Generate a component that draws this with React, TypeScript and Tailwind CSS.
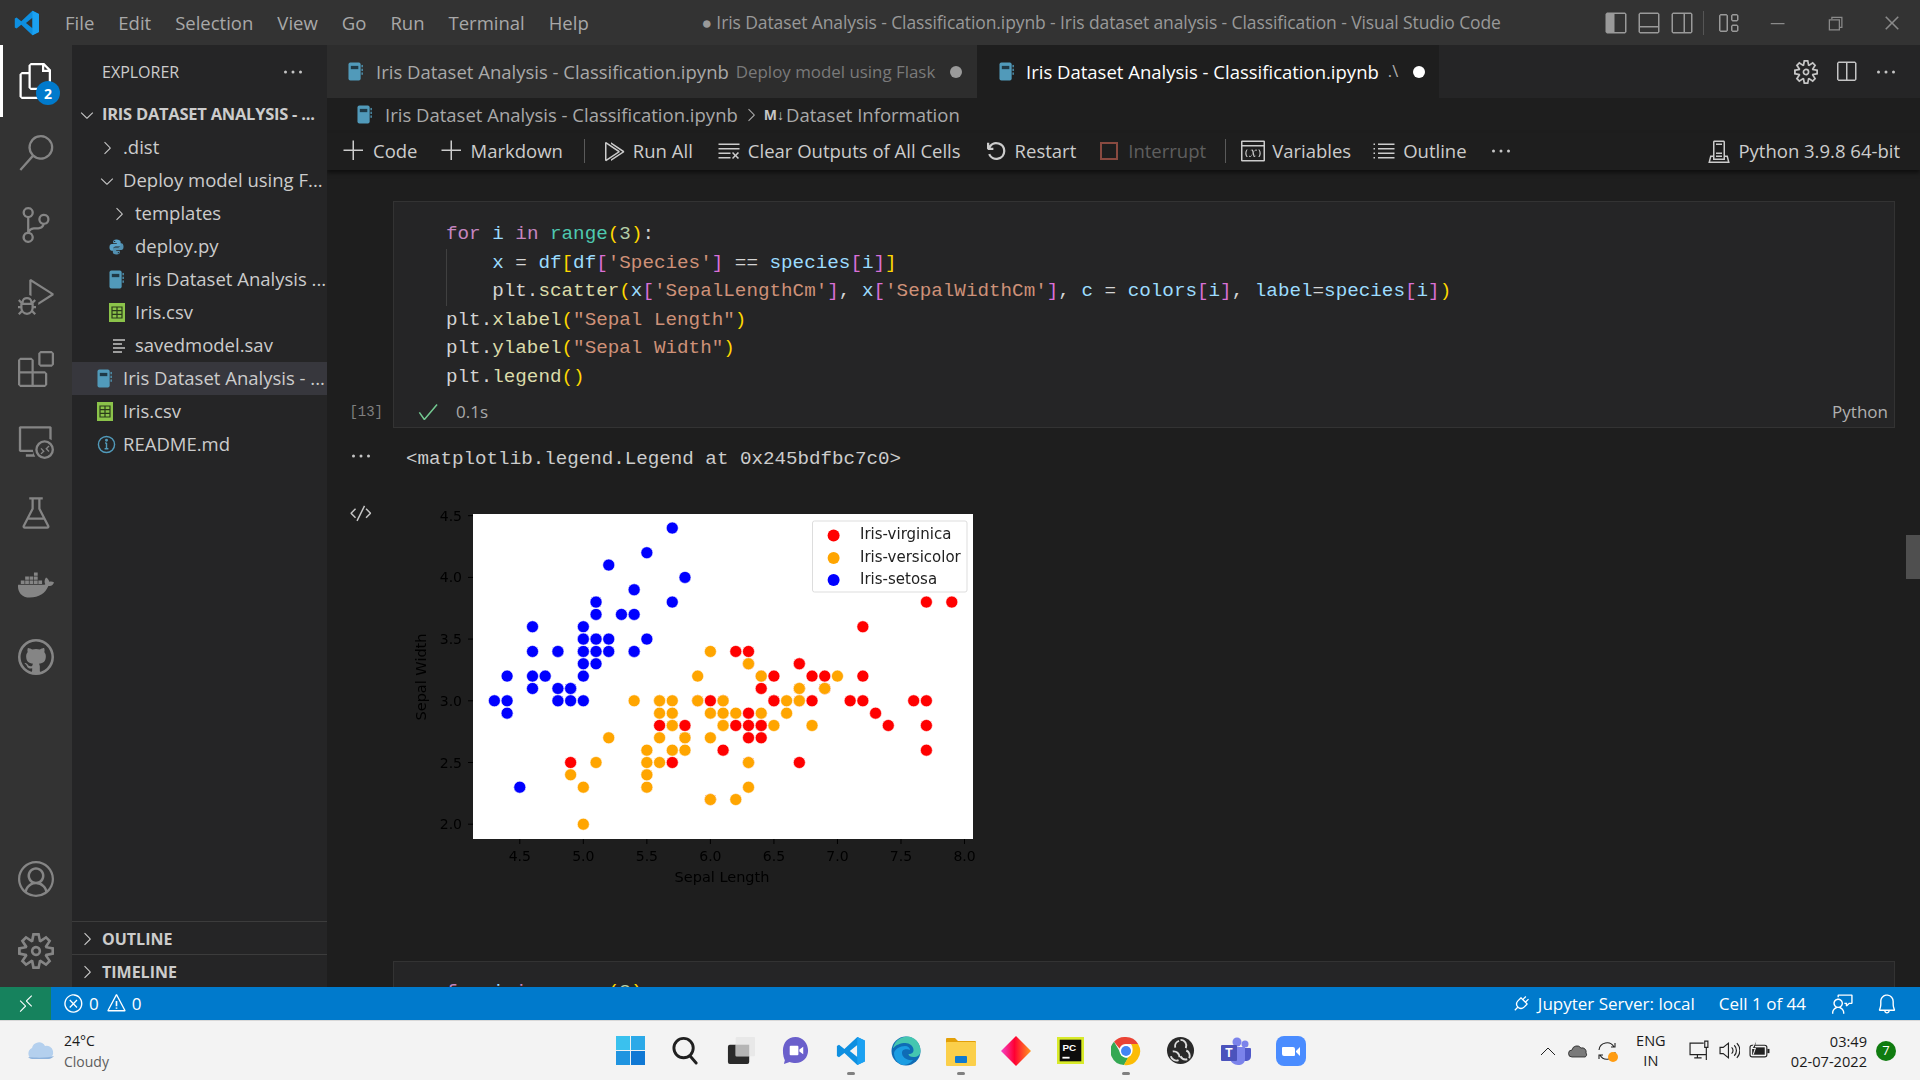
import type { ReactNode } from 'react'
import {
  VscFiles, VscSearch, VscSourceControl, VscDebugAlt, VscExtensions, VscRemoteExplorer, VscBeaker,
  VscAccount, VscSettingsGear, VscGithub, VscChevronRight, VscChevronDown, VscEllipsis, VscAdd,
  VscRunAll, VscClearAll, VscDebugRestart, VscListUnordered, VscCheck, VscCode, VscSplitHorizontal,
  VscLayoutSidebarLeft, VscLayoutPanelOff, VscLayoutSidebarRightOff, VscLayout, VscChromeMinimize,
  VscChromeRestore, VscChromeClose, VscRemote, VscError, VscWarning, VscPlug, VscFeedback, VscBell,
  VscVariableGroup, VscServerEnvironment,
} from 'react-icons/vsc'
import { FaDocker } from 'react-icons/fa'

// ---- Iris data ----

const setosa = '5.1,3.5;4.9,3.0;4.7,3.2;4.6,3.1;5.0,3.6;5.4,3.9;4.6,3.4;5.0,3.4;4.4,2.9;4.9,3.1;5.4,3.7;4.8,3.4;4.8,3.0;4.3,3.0;5.8,4.0;5.7,4.4;5.4,3.9;5.1,3.5;5.7,3.8;5.1,3.8;5.4,3.4;5.1,3.7;4.6,3.6;5.1,3.3;4.8,3.4;5.0,3.0;5.0,3.4;5.2,3.5;5.2,3.4;4.7,3.2;4.8,3.1;5.4,3.4;5.2,4.1;5.5,4.2;4.9,3.1;5.0,3.2;5.5,3.5;4.9,3.1;4.4,3.0;5.1,3.4;5.0,3.5;4.5,2.3;4.4,3.2;5.0,3.5;5.1,3.8;4.8,3.0;5.1,3.8;4.6,3.2;5.3,3.7;5.0,3.3'
const versicolor = '7.0,3.2;6.4,3.2;6.9,3.1;5.5,2.3;6.5,2.8;5.7,2.8;6.3,3.3;4.9,2.4;6.6,2.9;5.2,2.7;5.0,2.0;5.9,3.0;6.0,2.2;6.1,2.9;5.6,2.9;6.7,3.1;5.6,3.0;5.8,2.7;6.2,2.2;5.6,2.5;5.9,3.2;6.1,2.8;6.3,2.5;6.1,2.8;6.4,2.9;6.6,3.0;6.8,2.8;6.7,3.0;6.0,2.9;5.7,2.6;5.5,2.4;5.5,2.4;5.8,2.7;6.0,2.7;5.4,3.0;6.0,3.4;6.7,3.1;6.3,2.3;5.6,3.0;5.5,2.5;5.5,2.6;6.1,3.0;5.8,2.6;5.0,2.3;5.6,2.7;5.7,3.0;5.7,2.9;6.2,2.9;5.1,2.5;5.7,2.8'
const virginica = '6.3,3.3;5.8,2.7;7.1,3.0;6.3,2.9;6.5,3.0;7.6,3.0;4.9,2.5;7.3,2.9;6.7,2.5;7.2,3.6;6.5,3.2;6.4,2.7;6.8,3.0;5.7,2.5;5.8,2.8;6.4,3.2;6.5,3.0;7.7,3.8;7.7,2.6;6.0,2.2;6.9,3.2;5.6,2.8;7.7,2.8;6.3,2.7;6.7,3.3;7.2,3.2;6.2,2.8;6.1,3.0;6.4,2.8;7.2,3.0;7.4,2.8;7.9,3.8;6.4,2.8;6.3,2.8;6.1,2.6;7.7,3.0;6.3,3.4;6.4,3.1;6.0,3.0;6.9,3.1;6.7,3.1;6.9,3.1;5.8,2.7;6.8,3.2;6.7,3.3;6.7,3.0;6.3,2.5;6.5,3.0;6.2,3.4;5.9,3.0'

const px = (v: number) => 119.8 + (v - 4.5) * 127.06
const py = (v: number) => 15.7 + (4.5 - v) * 123.4

function Dots({ data, fill }: { data: string; fill: string }) {
  return (
    <>
      {data.split(';').map((p, i) => {
        const [a, b] = p.split(',').map(Number)
        return <circle key={i} cx={px(a)} cy={py(b)} r={6} fill={fill} stroke="#fff" strokeWidth={0.6} />
      })}
    </>
  )
}

function Chart() {
  const tickX = ['4.5', '5.0', '5.5', '6.0', '6.5', '7.0', '7.5', '8.0']
  const tickY = ['4.5', '4.0', '3.5', '3.0', '2.5', '2.0']
  return (
    <svg viewBox="0 0 600 400" className="w-[600px] h-[400px] blur-[0.5px]" fontFamily="'DejaVu Sans', sans-serif">
      <rect x={73} y={14} width={500} height={325} fill="#fff" />
      {tickX.map((t) => (
        <g key={t}>
          <line x1={px(+t)} x2={px(+t)} y1={339} y2={344} stroke="#000" />
          <text x={px(+t)} y={361} textAnchor="middle" fontSize={14} fill="#000">{t}</text>
        </g>
      ))}
      {tickY.map((t) => (
        <g key={t}>
          <line x1={68} x2={73} y1={py(+t)} y2={py(+t)} stroke="#000" />
          <text x={62} y={py(+t) + 5} textAnchor="end" fontSize={14} fill="#000">{t}</text>
        </g>
      ))}
      <text x={322} y={382} textAnchor="middle" fontSize={14.5} fill="#000">Sepal Length</text>
      <text x={0} y={0} transform="translate(26 177) rotate(-90)" textAnchor="middle" fontSize={14.5} fill="#000">Sepal Width</text>
      <Dots data={virginica} fill="#ff0000" />
      <Dots data={versicolor} fill="#ffa500" />
      <Dots data={setosa} fill="#0000ff" />
      <rect x={412.5} y={21} width={154.5} height={71} rx={2} fill="#fff" stroke="#ddd" />
      <circle cx={433.6} cy={35.5} r={6} fill="#ff0000" />
      <circle cx={433.6} cy={58} r={6} fill="#ffa500" />
      <circle cx={433.6} cy={80} r={6} fill="#0000ff" />
      <text x={460} y={39} fontSize={15} fill="#222">Iris-virginica</text>
      <text x={460} y={62} fontSize={15} fill="#222">Iris-versicolor</text>
      <text x={460} y={84} fontSize={15} fill="#222">Iris-setosa</text>
    </svg>
  )
}

// ---- Small drawn icons ----

function NotebookIcon({ className = '' }: { className?: string }) {
  return (
    <svg viewBox="0 0 16 20" className={`w-[15px] h-[19px] shrink-0 ${className}`}>
      <rect x={0.5} y={0.5} width={13} height={19} rx={2} fill="#519aba" />
      <rect x={3} y={4} width={8} height={3.5} fill="#1f3a47" />
      <rect x={14.4} y={3} width={1.4} height={2.5} fill="#519aba" />
      <rect x={14.4} y={7} width={1.4} height={2.5} fill="#519aba" />
      <rect x={14.4} y={11} width={1.4} height={2.5} fill="#519aba" />
    </svg>
  )
}

function CsvIcon() {
  return (
    <svg viewBox="0 0 16 19" className="w-[16px] h-[19px] shrink-0">
      <rect width={16} height={19} fill="#8bc34a" />
      <path d="M3 4h10v11H3z M3 7.7h10 M3 11.3h10 M8 4v11" fill="none" stroke="#2a3a1a" strokeWidth={1.2} />
    </svg>
  )
}

function PythonIcon() {
  return (
    <svg viewBox="0 0 16 18" className="w-[15px] h-[18px] shrink-0">
      <path d="M8 1C5 1 4.500 2.200 4.500 3.400V5H8.300v.8H3C1.600 5.800.5 6.900.5 9.300s1 3.600 2.400 3.600h1.500v-2c0-1.400 1.200-2.500 2.600-2.500h3.400c1.100 0 2-.9 2-2V3.400C11.900 2 10.700 1 8 1z" fill="#5ba3c9" />
      <path d="M8 17c3 0 3.500-1.200 3.500-2.400V13H7.700v-.8H13c1.400 0 2.500-1.100 2.500-3.500s-1-3.600-2.400-3.600h-1.500v2c0 1.400-1.200 2.500-2.600 2.500H6.100c-1.100 0-2 .9-2 2v3c0 1.400 1.200 2.400 3.900 2.400z" fill="#5ba3c9" opacity={0.85} />
      <circle cx={6} cy={3} r={0.7} fill="#252526" />
      <circle cx={10} cy={15} r={0.7} fill="#252526" />
    </svg>
  )
}

function FileLinesIcon() {
  return (
    <svg viewBox="0 0 20 20" className="w-[20px] h-[20px] shrink-0" fill="none" stroke="#c5c5c5" strokeWidth={1.4}>
      <path d="M4 4h12 M4 8h9 M4 12h12 M4 16h9" />
    </svg>
  )
}

function InfoIcon() {
  return (
    <svg viewBox="0 0 20 20" className="w-[19px] h-[19px] shrink-0" fill="none" stroke="#519aba" strokeWidth={1.5}>
      <circle cx={10} cy={10} r={8.5} />
      <path d="M10 8.500v6 M8 14.500h4 M8.500 8.500H10" />
      <circle cx={10} cy={5.500} r={0.8} fill="#519aba" />
    </svg>
  )
}

function VsLogo({ className = '' }: { className?: string }) {
  return (
    <svg viewBox="0 0 100 100" className={className}>
      <path d="M71 3l25 12v70L71 97 28 57 10 71 3 67V33l7-4 18 14L71 3zm0 27L46 50l25 20V30z" fill="#0e8fe0" />
      <path d="M71 3l25 12v70L71 97V70l0-40V3z" fill="#1ba1f2" />
    </svg>
  )
}

// ---- Activity bar ----

function ActivityItem({ children }: { children: ReactNode }) {
  return <div className="h-[72px] flex items-center justify-center text-[#858585] text-[36px]">{children}</div>
}

function ActivityBar() {
  return (
    <div className="w-[72px] shrink-0 bg-[#333333] flex flex-col justify-between">
      <div>
        <div className="relative h-[72px] flex items-center justify-center text-white text-[36px] border-l-[3px] border-white">
          <VscFiles className="-ml-[3px]" />
          <span className="absolute left-[33px] top-[36px] w-[24px] h-[24px] rounded-full bg-[#007acc] text-white text-[14px] font-bold flex items-center justify-center">2</span>
        </div>
        <ActivityItem><VscSearch /></ActivityItem>
        <ActivityItem><VscSourceControl /></ActivityItem>
        <ActivityItem><VscDebugAlt /></ActivityItem>
        <ActivityItem><VscExtensions /></ActivityItem>
        <ActivityItem><VscRemoteExplorer /></ActivityItem>
        <ActivityItem><VscBeaker /></ActivityItem>
        <ActivityItem><FaDocker /></ActivityItem>
        <ActivityItem><VscGithub /></ActivityItem>
      </div>
      <div>
        <ActivityItem><VscAccount /></ActivityItem>
        <ActivityItem><VscSettingsGear /></ActivityItem>
      </div>
    </div>
  )
}

// ---- Sidebar ----

function TreeRow({
  pad,
  box,
  icon,
  label,
  selected = false,
  bold = false,
}: {
  pad: string
  box: string
  icon: ReactNode
  label: string
  selected?: boolean
  bold?: boolean
}) {
  return (
    <div className={`h-[33px] flex items-center whitespace-nowrap overflow-hidden ${pad} ${selected ? 'bg-[#37373d]' : ''}`}>
      <span className={`flex items-center shrink-0 text-[20px] text-[#c5c5c5] ${box}`}>{icon}</span>
      <span className={bold ? 'font-bold text-[16.5px] tracking-[-0.25px]' : 'pb-[1px]'}>{label}</span>
    </div>
  )
}

function Sidebar() {
  return (
    <div className="w-[255px] shrink-0 bg-[#252526] flex flex-col text-[#cccccc] text-[18.5px]">
      <div className="h-[53px] flex items-center justify-between pl-[30px] pr-[22px] text-[16px]">
        <span>EXPLORER</span>
        <VscEllipsis className="text-[24px] text-[#c5c5c5]" />
      </div>
      <TreeRow pad="pl-[5px]" box="w-[25px]" icon={<VscChevronDown />} label="IRIS DATASET ANALYSIS - ..." bold />
      <TreeRow pad="pl-[25px]" box="w-[26px]" icon={<VscChevronRight />} label=".dist" />
      <TreeRow pad="pl-[25px]" box="w-[26px]" icon={<VscChevronDown />} label="Deploy model using F..." />
      <TreeRow pad="pl-[37px]" box="w-[26px]" icon={<VscChevronRight />} label="templates" />
      <TreeRow pad="pl-[37px]" box="w-[26px]" icon={<PythonIcon />} label="deploy.py" />
      <TreeRow pad="pl-[37px]" box="w-[26px]" icon={<NotebookIcon />} label="Iris Dataset Analysis ..." />
      <TreeRow pad="pl-[37px]" box="w-[26px]" icon={<CsvIcon />} label="Iris.csv" />
      <TreeRow pad="pl-[37px]" box="w-[26px]" icon={<FileLinesIcon />} label="savedmodel.sav" />
      <TreeRow pad="pl-[25px]" box="w-[26px]" icon={<NotebookIcon />} label="Iris Dataset Analysis - ..." selected />
      <TreeRow pad="pl-[25px]" box="w-[26px]" icon={<CsvIcon />} label="Iris.csv" />
      <TreeRow pad="pl-[25px]" box="w-[26px]" icon={<InfoIcon />} label="README.md" />
      <div className="flex-1" />
      <div className="h-[33px] border-t border-[#3c3c3c] flex items-center pl-[5px] pt-[2px] font-bold text-[16px]">
        <VscChevronRight className="text-[20px] mr-[5px]" />
        OUTLINE
      </div>
      <div className="h-[33px] border-t border-[#3c3c3c] flex items-center pl-[5px] pt-[2px] font-bold text-[16px]">
        <VscChevronRight className="text-[20px] mr-[5px]" />
        TIMELINE
      </div>
    </div>
  )
}

// ---- Editor ----

const kw = 'text-[#c586c0]'
const vr = 'text-[#9cdcfe]'
const fn = 'text-[#dcdcaa]'
const st = 'text-[#ce9178]'
const ty = 'text-[#4ec9b0]'
const nu = 'text-[#b5cea8]'
const pl = 'text-[#d4d4d4]'
const b1 = 'text-[#ffd700]'
const b2 = 'text-[#da70d6]'

type Tok = [string, string]

function CodeLine({ toks }: { toks: Tok[] }) {
  return (
    <div className="h-[28.5px] leading-[28.5px] whitespace-pre">
      {toks.map(([t, c], i) => (
        <span key={i} className={c}>{t}</span>
      ))}
    </div>
  )
}

const forLine: Tok[] = [['for', kw], [' ', pl], ['i', vr], [' ', pl], ['in', kw], [' ', pl], ['range', ty], ['(', b1], ['3', nu], [')', b1], [':', pl]]

function ToolbarItem({ icon, label, className = 'text-[#cccccc]' }: { icon: ReactNode; label: string; className?: string }) {
  return (
    <span className={`flex items-center gap-[7px] ${className}`}>
      <span className="text-[24px] flex items-center">{icon}</span>
      {label}
    </span>
  )
}

function Editor() {
  return (
    <div className="flex-1 min-w-0 bg-[#1e1e1e] flex flex-col relative overflow-hidden">
      {/* Onglets */}
      <div className="h-[53px] shrink-0 flex bg-[#252526] items-stretch">
        <div className="w-[650px] shrink-0 bg-[#2d2d2d] flex items-center pl-[21px] text-[18.5px] text-[#a9a9a9] whitespace-nowrap">
          <NotebookIcon className="mr-[13px]" />
          <span>Iris Dataset Analysis - Classification.ipynb</span>
          <span className="ml-[7px] text-[16.9px] text-[#7a7a7a]">Deploy model using Flask</span>
          <span className="ml-[15px] w-[12px] h-[12px] rounded-full bg-[#9a9a9a]" />
        </div>
        <div className="w-[462px] shrink-0 bg-[#1e1e1e] flex items-center pl-[22px] text-[18.5px] text-white whitespace-nowrap">
          <NotebookIcon className="mr-[12px]" />
          <span>Iris Dataset Analysis - Classification.ipynb</span>
          <span className="ml-[9px] text-[16.5px] text-[#b0b0b0]">.\</span>
          <span className="ml-[15px] w-[12px] h-[12px] rounded-full bg-white" />
        </div>
        <div className="flex-1 flex items-center justify-end gap-[16px] pr-[22px] text-[24px] text-[#c5c5c5]">
          <VscSettingsGear />
          <VscSplitHorizontal />
          <VscEllipsis />
        </div>
      </div>

      {/* Fil d'Ariane */}
      <div className="h-[35px] shrink-0 flex items-center pl-[30px] pb-[2px] text-[18.5px] text-[#a9a9a9] whitespace-nowrap">
        <NotebookIcon className="mr-[13px]" />
        <span>Iris Dataset Analysis - Classification.ipynb</span>
        <VscChevronRight className="text-[20px] mx-[3px]" />
        <span className="text-[14px] font-bold text-[#c5c5c5] mr-[2px]">M↓</span>
        <span>Dataset Information</span>
      </div>

      {/* Barre d'outils du notebook */}
      <div className="h-[37px] shrink-0 flex items-center pl-[15px] pr-[20px] pb-[2px] text-[18.5px] whitespace-nowrap shadow-[0_3px_4px_rgba(0,0,0,0.5)]">
        <ToolbarItem icon={<VscAdd />} label="Code" />
        <span className="w-[22px]" />
        <ToolbarItem icon={<VscAdd />} label="Markdown" />
        <span className="ml-[21px] mr-[17px] w-px h-[24px] bg-[#5a5a5a]" />
        <ToolbarItem icon={<VscRunAll />} label="Run All" />
        <span className="w-[24px]" />
        <ToolbarItem icon={<VscClearAll />} label="Clear Outputs of All Cells" />
        <span className="w-[23px]" />
        <ToolbarItem icon={<VscDebugRestart />} label="Restart" />
        <span className="w-[24px]" />
        <span className="flex items-center gap-[10px] text-[#5f5f5f]">
          <span className="w-[18px] h-[18px] border-2 border-[#8a4a40]" />
          Interrupt
        </span>
        <span className="ml-[19px] mr-[15px] w-px h-[24px] bg-[#5a5a5a]" />
        <ToolbarItem icon={<VscVariableGroup />} label="Variables" />
        <span className="w-[21px]" />
        <ToolbarItem icon={<VscListUnordered />} label="Outline" />
        <VscEllipsis className="text-[24px] ml-[22px] text-[#c5c5c5]" />
        <span className="flex-1" />
        <ToolbarItem icon={<VscServerEnvironment />} label="Python 3.9.8 64-bit" />
      </div>

      {/* Cellules */}
      <div className="flex-1 min-h-0 pt-[31px] overflow-hidden font-['Liberation_Mono',monospace] text-[19.25px]">
        <div className="flex pr-[25px]">
          <div className="w-[66px] shrink-0 flex items-end justify-end pr-[10px] pb-[5px] text-[14px] text-[#808080]">
            [13]
          </div>
          <div className="flex-1 h-[227px] bg-[#252526] border border-[#333333] pt-[18px] pl-[52px]">
            <CodeLine toks={forLine} />
            <div className="border-l border-[#404040] pl-[45.2px]">
              <CodeLine toks={[['x', vr], [' = ', pl], ['df', vr], ['[', b1], ['df', vr], ['[', b2], ["'Species'", st], [']', b2], [' == ', pl], ['species', vr], ['[', b2], ['i', vr], [']', b2], [']', b1]]} />
              <CodeLine toks={[['plt.', pl], ['scatter', fn], ['(', b1], ['x', vr], ['[', b2], ["'SepalLengthCm'", st], [']', b2], [', ', pl], ['x', vr], ['[', b2], ["'SepalWidthCm'", st], [']', b2], [', ', pl], ['c', vr], [' = ', pl], ['colors', vr], ['[', b2], ['i', vr], [']', b2], [', ', pl], ['label', vr], ['=', pl], ['species', vr], ['[', b2], ['i', vr], [']', b2], [')', b1]]} />
            </div>
            <CodeLine toks={[['plt.', pl], ['xlabel', fn], ['(', b1], ['"Sepal Length"', st], [')', b1]]} />
            <CodeLine toks={[['plt.', pl], ['ylabel', fn], ['(', b1], ['"Sepal Width"', st], [')', b1]]} />
            <CodeLine toks={[['plt.', pl], ['legend', fn], ['(', b1], [')', b1]]} />
            <div className="h-[37px] -ml-[52px] pr-[6px] pl-[22px] flex items-center font-['Open_Sans',sans-serif] text-[17px] text-[#a9a9a9] pt-[4px]">
              <VscCheck className="text-[#73c991] text-[24px] mr-[16px]" />
              <span>0.1s</span>
              <span className="flex-1" />
              <span className="text-[#b0b0b0]">Python</span>
            </div>
          </div>
        </div>

        <div className="flex h-[533px]">
          <div className="w-[66px] shrink-0 flex flex-col items-center pl-[1px] text-[#c5c5c5]">
            <VscEllipsis className="text-[24px] mt-[16px]" />
            <VscCode className="text-[24px] mt-[33px]" />
          </div>
          <div className="flex-1">
            <div className="h-[72px] pt-[17px] pl-[13px] text-[19.2px] leading-[28px] text-[#cccccc] whitespace-pre">{'<matplotlib.legend.Legend at 0x245bdfbc7c0>'}</div>
            <div className="ml-[7px]"><Chart /></div>
          </div>
        </div>

        <div className="flex pr-[25px]">
          <div className="w-[66px] shrink-0" />
          <div className="flex-1 h-[227px] bg-[#252526] border border-[#333333] pt-[16px] pl-[52px]">
            <CodeLine toks={forLine} />
          </div>
        </div>
      </div>

      {/* Scrollbar */}
      <div className="absolute right-0 top-[490px] w-[14px] h-[44px] bg-[#4f4f4f]" />
    </div>
  )
}

// ---- Taskbar ----

function TaskIcon({ children, running = false }: { children: ReactNode; running?: boolean }) {
  return (
    <div className="w-[55px] h-[60px] relative flex items-center justify-center">
      {children}
      {running && <span className="absolute bottom-[6px] w-[8px] h-[3px] rounded-full bg-[#808080]" />}
    </div>
  )
}

function Taskbar() {
  return (
    <div className="h-[60px] shrink-0 bg-[#f3f3f3] border-t border-[#d8d8d8] flex items-center text-[#1a1a1a] text-[14px] font-['Open_Sans',sans-serif]">
      <div className="w-[603px] shrink-0 flex items-center pl-[24px] gap-[8px]">
        <svg viewBox="0 0 32 20" className="w-[32px] h-[22px]">
          <path d="M8 18a6 6 0 0 1 0-11 7 7 0 0 1 13-2 6.500 6.500 0 0 1 3 13z" fill="#b4d0ee" />
          <path d="M4 16a6 6 0 0 0 5 2h15c3 0 5-1.500 6-3-6 2-18 2-26 1z" fill="#8fb3dc" />
        </svg>
        <div className="leading-[21px] text-[14px]">
          <div>24°C</div>
          <div className="text-[#5d5d5d]">Cloudy</div>
        </div>
      </div>
      <TaskIcon>
        <svg viewBox="0 0 30 30" className="w-[29px] h-[29px]">
          <rect x={0} y={0} width={14.5} height={14.5} fill="#3ac1ee" />
          <rect x={15.5} y={0} width={14.5} height={14.5} fill="#2ba9e8" />
          <rect x={0} y={15.5} width={14.5} height={14.5} fill="#1f94e0" />
          <rect x={15.5} y={15.5} width={14.5} height={14.5} fill="#0f78d4" />
        </svg>
      </TaskIcon>
      <TaskIcon>
        <svg viewBox="0 0 30 30" className="w-[29px] h-[29px]" fill="none" stroke="#202020" strokeWidth={3}>
          <circle cx={13} cy={12.500} r={10} />
          <path d="M20 21l6 7" strokeLinecap="round" />
        </svg>
      </TaskIcon>
      <TaskIcon>
        <svg viewBox="0 0 30 30" className="w-[29px] h-[29px]">
          <rect x={2} y={9} width={22} height={20} rx={2} fill="#2a2a2a" />
          <rect x={10} y={1} width={20} height={20} rx={1} fill="#e8e8e8" />
          <rect x={10} y={9} width={14} height={12} fill="#b5b5b5" />
        </svg>
      </TaskIcon>
      <TaskIcon>
        <svg viewBox="0 0 30 30" className="w-[29px] h-[29px]">
          <path d="M15 1C7 1 2 7 2 15c0 5 1 8 2 10l-1 4 6-2c2 1 4 1 6 1 8 0 13-6 13-13S23 1 15 1z" fill="#6a5fcb" />
          <path d="M9 11a1 1 0 0 1 1-1h7a1 1 0 0 1 1 1v8a1 1 0 0 1-1 1h-7a1 1 0 0 1-1-1zM19 14l4-3v8l-4-3z" fill="#fff" />
        </svg>
      </TaskIcon>
      <TaskIcon running><VsLogo className="w-[30px] h-[30px]" /></TaskIcon>
      <TaskIcon>
        <svg viewBox="0 0 30 30" className="w-[30px] h-[30px]">
          <circle cx={15} cy={15} r={14.500} fill="#0f6cb5" />
          <path d="M2 12C4 4 11 .5 16 .5 24 .5 29.500 7 29.500 15c0 4-3 6-7 6-3 0-5-1-5-3 4 0 5-2 5-4 0-4-4-7-8-7-5 0-10 2-12 5z" fill="#45c6b0" />
          <path d="M14 10c3 0 5 2 5 4-2-1-8-2-8 3 0 4 5 8 11 7-3 4-7 5-10 5-5-1-9-6-9-12 1-4 6-7 11-7z" fill="#1b9de2" />
        </svg>
      </TaskIcon>
      <TaskIcon running>
        <svg viewBox="0 0 30 30" className="w-[30px] h-[30px]">
          <path d="M0 3a1 1 0 0 1 1-1h8l3 3h17a1 1 0 0 1 1 1v4H0z" fill="#e3a008" />
          <rect x={0} y={6} width={30} height={24} rx={1} fill="#fbcf4a" />
          <rect x={9} y={20} width={12} height={7} rx={1} fill="#0f7ad0" />
        </svg>
      </TaskIcon>
      <TaskIcon>
        <svg viewBox="0 0 30 30" className="w-[30px] h-[30px]">
          <defs>
            <linearGradient id="kite" x1="0" x2="1" y1="0" y2="0">
              <stop offset="0" stopColor="#f542c8" />
              <stop offset="0.45" stopColor="#ff0033" />
              <stop offset="1" stopColor="#ff9a1f" />
            </linearGradient>
          </defs>
          <path d="M15 0l15 15-15 15L0 15z" fill="url(#kite)" />
        </svg>
      </TaskIcon>
      <TaskIcon>
        <svg viewBox="0 0 30 30" className="w-[27px] h-[27px]">
          <rect width={30} height={30} fill="#d8ea2a" />
          <rect x={3} y={3} width={24} height={24} fill="#0c0c0c" />
          <text x={6} y={15} fontSize={11} fontWeight={700} fill="#fff" fontFamily="'Liberation Sans', sans-serif">PC</text>
          <rect x={6} y={22} width={8} height={2} fill="#fff" />
        </svg>
      </TaskIcon>
      <TaskIcon running>
        <svg viewBox="0 0 30 30" className="w-[30px] h-[30px]">
          <path d="M15 1a14 14 0 0 1 12.100 7H15a7 7 0 0 0-6.500 4.400L3 5.700A14 14 0 0 1 15 1z" fill="#ea4335" />
          <path d="M3 5.700l6 10.300a7 7 0 0 0 8.300 5.700L13 29A14 14 0 0 1 3 5.700z" fill="#34a853" />
          <path d="M27.100 8A14 14 0 0 1 13 29l5.900-11A7 7 0 0 0 20 8z" fill="#fbbc05" />
          <circle cx={15} cy={15} r={6.500} fill="#fff" />
          <circle cx={15} cy={15} r={5} fill="#4285f4" />
        </svg>
      </TaskIcon>
      <TaskIcon>
        <svg viewBox="0 0 30 30" className="w-[29px] h-[29px]">
          <circle cx={15} cy={15} r={14} fill="#2a2a2a" />
          <path d="M15 4a6 6 0 0 1 5.500 8.500 M9.500 12a6 6 0 0 1 4-7 M7 16a6 6 0 0 1 7 6 M13 25a6 6 0 0 1-8-4 M21 15a6 6 0 0 1 3 8 M22 24a6 6 0 0 1-7-3" fill="none" stroke="#ddd" strokeWidth={2} />
        </svg>
      </TaskIcon>
      <TaskIcon>
        <svg viewBox="0 0 30 30" className="w-[30px] h-[30px]">
          <circle cx={24} cy={8} r={3.500} fill="#7b83eb" />
          <circle cx={16} cy={6} r={4.500} fill="#7b83eb" />
          <path d="M20 12h9a1 1 0 0 1 1 1v7c0 4-3 5-5 5h-5z" fill="#5059c9" />
          <path d="M9 11h15v12c0 4-3 6-7 6s-8-3-8-7z" fill="#7b83eb" />
          <rect x={0} y={9} width={16} height={16} rx={1} fill="#4b53bc" />
          <text x={8} y={21} textAnchor="middle" fontSize={12} fontWeight={700} fill="#fff" fontFamily="'Liberation Sans', sans-serif">T</text>
        </svg>
      </TaskIcon>
      <TaskIcon>
        <svg viewBox="0 0 30 30" className="w-[30px] h-[30px]">
          <rect width={30} height={30} rx={8} fill="#4a8cff" />
          <path d="M6 12a1 1 0 0 1 1-1h10a2 2 0 0 1 2 2v6a1 1 0 0 1-1 1H8a2 2 0 0 1-2-2zM20 15l4-4v9l-4-4z" fill="#fff" />
        </svg>
      </TaskIcon>
      <div className="flex-1" />
      <div className="flex items-center pr-[24px]">
        <svg viewBox="0 0 16 10" className="w-[16px] h-[10px] mr-[12px]" fill="none" stroke="#222" strokeWidth={1}>
          <path d="M1 9l7-7 7 7" />
        </svg>
        <svg viewBox="0 0 20 14" className="w-[20px] h-[14px] mr-[9px]">
          <path d="M4 13a3.500 3.500 0 0 1 0-7 5 5 0 0 1 9-2 4 4 0 0 1 5 5 2.500 2.500 0 0 1-1 4z" fill="#7a7a7a" stroke="#222" strokeWidth={0.8} />
        </svg>
        <span className="relative mr-[11px] flex">
          <svg viewBox="0 0 20 20" className="w-[20px] h-[20px]" fill="none" stroke="#222" strokeWidth={1.1}>
            <path d="M2 9a8 8 0 0 1 15-3 M18 2v4h-4 M18 11a8 8 0 0 1-15 3 M2 18v-4h4" />
          </svg>
          <span className="absolute right-[-1px] bottom-[-1px] w-[10px] h-[10px] rounded-full bg-[#ff9c12]" />
        </span>
        <div className="w-[46px] text-center leading-[20px] text-[14.500px] mr-[15px]">
          <div>ENG</div>
          <div>IN</div>
        </div>
        <svg viewBox="0 0 20 20" className="w-[21px] h-[21px] mr-[9px]" fill="none" stroke="#222" strokeWidth={1.1}>
          <path d="M14 3H1v11h15 M5 17h7 M8 14v3 M15 1h3v6h-3z M16.500 7v12" />
        </svg>
        <svg viewBox="0 0 20 20" className="w-[21px] h-[21px] mr-[9px]" fill="none" stroke="#222" strokeWidth={1.1}>
          <path d="M1 7h3l5-4v14l-5-4H1z M12 7a4 4 0 0 1 0 6 M14.500 5a7 7 0 0 1 0 10 M17 3a10 10 0 0 1 0 14" />
        </svg>
        <svg viewBox="0 0 20 20" className="w-[21px] h-[21px] mr-[21px]">
          <rect x={1} y={5} width={16} height={11} rx={2} fill="none" stroke="#222" strokeWidth={1.1} />
          <rect x={3} y={7} width={12} height={7} fill="#222" />
          <rect x={17.500} y={8.500} width={2} height={4} fill="#222" />
          <path d="M7 0L3 8h3l-2 6" stroke="#f3f3f3" strokeWidth={1} fill="#222" />
        </svg>
        <div className="text-right leading-[20px] text-[14.600px] mr-[9px]">
          <div>03:49</div>
          <div>02-07-2022</div>
        </div>
        <span className="w-[20px] h-[20px] rounded-full bg-[#107c10] text-white text-[13px] flex items-center justify-center">7</span>
      </div>
    </div>
  )
}

// ---- App ----

export default function App() {
  const menus = ['File', 'Edit', 'Selection', 'View', 'Go', 'Run', 'Terminal', 'Help']
  return (
    <div className="w-[1920px] h-[1080px] flex flex-col overflow-hidden font-['Open_Sans',sans-serif]">
      <div className="h-[45px] shrink-0 bg-[#333333] flex items-center text-[#a8a8a8] text-[18.5px] whitespace-nowrap">
        <VsLogo className="w-[26px] h-[26px] ml-[14px] mr-[25px]" />
        <div className="flex gap-[24px]">
          {menus.map((m) => <span key={m}>{m}</span>)}
        </div>
        <div className="flex-1 text-center text-[#999999] text-[17.500px] tracking-[-0.1px] pl-[10px]">
          ● Iris Dataset Analysis - Classification.ipynb - Iris dataset analysis - Classification - Visual Studio Code
        </div>
        <div className="flex items-center text-[24px] text-[#9a9a9a] gap-[9px]">
          <VscLayoutSidebarLeft />
          <VscLayoutPanelOff />
          <VscLayoutSidebarRightOff />
          <span className="w-px h-[24px] bg-[#555] mr-[3.5px]" />
          <VscLayout />
        </div>
        <div className="flex items-center text-[20px] text-[#8a8a8a] gap-[37.5px] pl-[27px] pr-[18px]">
          <VscChromeMinimize />
          <VscChromeRestore />
          <VscChromeClose />
        </div>
      </div>

      <div className="flex-1 min-h-0 flex">
        <ActivityBar />
        <Sidebar />
        <Editor />
      </div>

      <div className="h-[33px] shrink-0 bg-[#007acc] flex items-center text-white text-[17px] whitespace-nowrap">
        <div className="w-[51px] h-full bg-[#16825d] flex items-center justify-center text-[20px]"><VscRemote /></div>
        <div className="flex items-center pl-[12px] gap-[5px] text-[21px]">
          <VscError />
          <span className="text-[17px] mr-[2px]">0</span>
          <VscWarning />
          <span className="text-[17px]">0</span>
        </div>
        <div className="flex-1" />
        <div className="flex items-center pr-[22px]">
          <VscPlug className="text-[20px] mr-[7px] rotate-45" />
          <span>Jupyter Server: local</span>
          <span className="ml-[24px]">Cell 1 of 44</span>
          <VscFeedback className="text-[22px] ml-[26px]" />
          <VscBell className="text-[22px] ml-[22px]" />
        </div>
      </div>

      <Taskbar />
    </div>
  )
}
